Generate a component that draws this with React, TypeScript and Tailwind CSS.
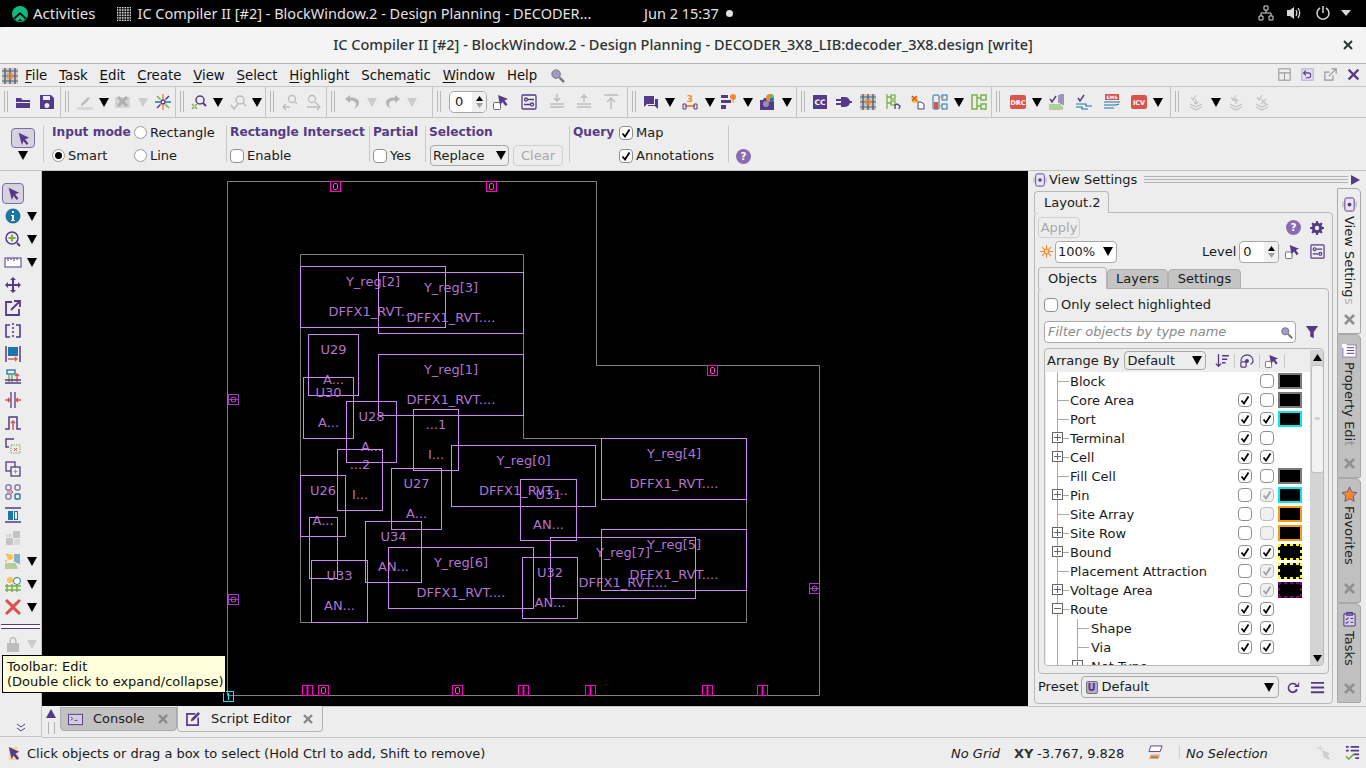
import type { ReactNode } from 'react'

const PUR = '#553b87'
const GR = '#bcbcbc'
const RED = '#d9534f'
const BLU = '#1c75a8'
const ORG = '#f08a32'
const GRN = '#7bb04a'

const icons: Record<string, ReactNode> = {
    open: <path d="M1 4h5l1.500 2H15v2H1zM1 9h14v5H1z" fill={PUR} />,
    save: <path fillRule="evenodd" d="M1 1h11l3 3v11H1zM4 2v4h7V2zm4 7a2.500 2.500 0 100 5 2.500 2.500 0 000-5z" fill={PUR} />,
    pen: <g><path d="M4 10l7-7 2 1.500-7 7H4z" fill={GR} /><rect x="0" y="13" width="16" height="3" fill="#d8d8d8" /></g>,
    xdoc: <g><rect x="0" y="3" width="15" height="11" fill="#d4d4d4" /><path d="M3 3l9 9M12 3l-9 9" stroke="#b0b0b0" strokeWidth="3" /></g>,
    star: <g strokeWidth="1.500"><path d="M8 0v5M8 11v5" stroke={ORG} /><path d="M0 8h5M11 8h5" stroke={BLU} /><path d="M2 2l3.500 3.500M10.500 10.500L14 14" stroke={GRN} /><path d="M14 2l-3.500 3.500M5.500 10.500L2 14" stroke={PUR} /><circle cx="8" cy="8" r="2" stroke={PUR} /></g>,
    zoomg: <g><circle cx="10" cy="6" r="4" stroke={PUR} strokeWidth="1.500" /><path d="M13 9l3 3" stroke={PUR} strokeWidth="2" /><path d="M2 10l2 2M7 10l-2 2M2 15l2-2M7 15l-2-2" stroke={GRN} strokeWidth="1.500" /></g>,
    zoomd: <g stroke={GR} strokeWidth="1.500"><circle cx="10" cy="6" r="4" /><path d="M13 9l3 3M1 11l3 4 4-5" /></g>,
    zl: <g stroke={GR} strokeWidth="1.300"><circle cx="10" cy="5" r="3.500" /><path d="M13 8l2 2M8 13H1M4 10l-3 3 3 3" /></g>,
    zr: <g stroke={GR} strokeWidth="1.300"><circle cx="6" cy="5" r="3.500" /><path d="M9 8l3 3M1 13h13M11 10l3 3-3 3" /></g>,
    undo: <path d="M6 1L1 5l5 4V6.500c4 0 6 1.500 6 3.500 0 2-1 3.500-2 4.500 3-1 5-3 5-6s-3-5-9-5z" fill="#b4b4b4" />,
    redo: <path d="M10 1l5 4-5 4V6.500c-4 0-6 1.500-6 3.500 0 2 1 3.500 2 4.500-3-1-5-3-5-6s3-5 9-5z" fill="#b4b4b4" />,
    cursor: <g><rect x="0.500" y="8.500" width="7" height="7" rx="1" fill="#fff" stroke="#666" /><path d="M5 1l10 4-3.500 1.500 3 4-2 1.500-3-4L7 11z" fill={PUR} /></g>,
    cfg: <g stroke={PUR} strokeWidth="1.300"><rect x="1" y="1" width="14" height="14" rx="1" /><circle cx="5" cy="5.500" r="1.500" /><path d="M7 5.500h6M3 10.500h6" /><circle cx="11" cy="10.500" r="1.500" /></g>,
    d1: <g stroke={GR} strokeWidth="1.500"><path d="M8 0v7M5 4l3 3 3-3M1 10h14M1 13h14" /></g>,
    d2: <g stroke={GR} strokeWidth="1.500"><path d="M8 8V1M5 4l3-3 3 3M1 10h14M1 13h14" /></g>,
    d3: <g stroke={GR} strokeWidth="1.500"><path d="M1 1h14M8 15V4M4 8l4-4 4 4" /></g>,
    chat: <g fill={PUR}><path d="M1 2h10v8H4l-3 3z" /><path d="M12 5h3v10l-3-3H5v-1h7z" /></g>,
    ruler3: <g><text x="8" y="8" textAnchor="middle" fontSize="9" fontWeight="700" fill={ORG} fontFamily="DejaVu Sans">3</text><path d="M3 12h10" stroke={ORG} strokeWidth="2" /><path d="M1 10h3v5H1zM12 10h3v5h-3z" stroke={PUR} /></g>,
    bars: <g><path d="M0 1h7v3H0zM0 6h10v3H0zM0 11h5v4H0z" fill={PUR} /><circle cx="12" cy="3" r="3" fill={ORG} /><path d="M12 6v3" stroke={ORG} /></g>,
    cam: <g><path d="M1 6h3l1-2h5v12H1zM10 7h5v9h-5z" fill={PUR} /><circle cx="11" cy="4" r="4" fill={ORG} /><path d="M11 0a4 4 0 014 4h-4z" fill={GRN} /><path d="M11 4h4a4 4 0 01-4 4z" fill={BLU} /><circle cx="7" cy="10" r="3" fill="#9a8cb8" /></g>,
    cc: <g><rect x="1" y="1" width="14" height="14" fill={PUR} /><text x="8" y="11" textAnchor="middle" fontSize="7.500" fontWeight="700" fill="#fff" fontFamily="DejaVu Sans">CC</text></g>,
    plug: <g fill={PUR}><path d="M5 3h4a5 5 0 010 10H5z" /><path d="M0 5h5v2H0zM0 9h5v2H0zM13 7h3v2h-3z" /></g>,
    chip: <g><rect x="0" y="0" width="16" height="16" fill="#d9c9a8" /><path d="M3 0v16M8 0v16M13 0v16" stroke={PUR} strokeWidth="1.200" /><path d="M0 3h16M0 8h16M0 13h16" stroke={BLU} strokeWidth="1.200" /><rect x="5" y="5" width="6" height="6" fill={ORG} opacity=".6" /></g>,
    tbchip: <g><rect x="0" y="0" width="16" height="16" fill="#cfcfcf" /><path d="M2 0v16M5 0v16M8 0v16M11 0v16M14 0v16M0 2h16M0 5h16M0 8h16M0 11h16M0 14h16" stroke="#000" strokeWidth="1" /></g>,
    tree: <g strokeWidth="1.300"><path d="M2 0v15M2 3h5M2 9h5" stroke={GRN} /><rect x="6" y="1" width="4" height="4" stroke={GRN} /><rect x="6" y="7" width="4" height="4" stroke={GRN} /><path d="M10 15v-4l2-1 3 2-1 3" stroke={PUR} /></g>,
    hand: <g><path d="M1 3l6-1 1 6-5 1z" fill="#f5c400" /><path d="M2 2l5 5M7 2L2 7" stroke={RED} strokeWidth="1.500" /><path d="M8 8h3l3 2v5H8z" fill="#fff" stroke={PUR} /></g>,
    batt: <g><rect x="1" y="1" width="6" height="14" rx="1" stroke={BLU} /><rect x="2" y="8" width="4" height="7" fill={RED} /><rect x="10" y="1" width="5" height="5" stroke={BLU} /><rect x="10" y="10" width="5" height="5" stroke={BLU} /><path d="M7 3h5M8 12h2" stroke={ORG} /></g>,
    gboxes: <g stroke={GRN} strokeWidth="1.500"><rect x="1" y="1" width="5" height="14" /><rect x="10" y="1" width="5" height="5" /><rect x="10" y="10" width="5" height="5" /><path d="M6 4h4M6 12h4" /></g>,
    drc: <g><rect x="0" y="1" width="16" height="14" rx="2" fill={RED} /><text x="8" y="11" textAnchor="middle" fontSize="6.500" fontWeight="700" fill="#fff" fontFamily="DejaVu Sans">DRC</text></g>,
    icv: <g><rect x="0" y="1" width="16" height="14" rx="2" fill={RED} /><text x="8" y="11" textAnchor="middle" fontSize="6.500" fontWeight="700" fill="#fff" fontFamily="DejaVu Sans">ICV</text></g>,
    chkg: <g><path d="M1 5l2 3 4-6" stroke={PUR} strokeWidth="1.500" /><path d="M0 11h12M0 13h14M0 15h14" stroke={GRN} /><path d="M10 1v8M12 0v10M14 0v11" stroke={PUR} /></g>,
    chkb: <g><path d="M2 4l2 3 4-6" stroke={PUR} strokeWidth="1.500" /><path d="M0 10h10v2H16M0 13h6v2H12" stroke={BLU} strokeWidth="1.200" /></g>,
    ems: <g><rect x="1" y="0" width="14" height="6" fill={RED} /><text x="8" y="5" textAnchor="middle" fontSize="4.500" fontWeight="700" fill="#fff" fontFamily="DejaVu Sans">EMS</text><path d="M0 8h16M0 11h12l3-1M0 14h10" stroke={BLU} strokeWidth="1.200" /></g>,
    stack1: <g stroke="#c4c4c4" strokeWidth="1.300"><path d="M3 3l2 3 3-5M8 5v5M6 8l2 2 2-2M2 10l6 3 6-3M2 13l6 3 6-3" /></g>,
    stack2: <g stroke="#c4c4c4" strokeWidth="1.300"><path d="M3 3l2 3 3-5M8 10V5M6 7l2-2 2 2M2 10l6 3 6-3M2 13l6 3 6-3" /></g>,
    stack3: <g stroke="#c4c4c4" strokeWidth="1.300"><path d="M3 3l2 3 3-5M7 5l5 5M12 5l-5 5M2 10l6 3 6-3M2 13l6 3 6-3" /></g>,
    help: <g><circle cx="8" cy="8" r="8" fill="#8a6bb0" /><text x="8" y="12" textAnchor="middle" fontSize="11" fontWeight="700" fill="#fff" fontFamily="DejaVu Sans">?</text></g>,
    gear: <path fillRule="evenodd" d="M7 0h2l.500 2.200 1.500.600 2-1.200 1.400 1.400-1.200 2 .600 1.500L16 7v2l-2.200.500-.600 1.500 1.200 2-1.400 1.400-2-1.200-1.500.600L9 16H7l-.500-2.200-1.500-.600-2 1.200-1.400-1.400 1.200-2-.600-1.500L0 9V7l2.200-.500.600-1.500-1.200-2L3 1.600l2 1.200 1.500-.600zM8 5.500a2.500 2.500 0 100 5 2.500 2.500 0 000-5z" fill={PUR} />,
    sun: <g stroke={ORG} strokeWidth="1.300"><path d="M8 0v16M0 8h16M2.500 2.500l11 11M13.500 2.500l-11 11" /><circle cx="8" cy="8" r="3" fill="#fbd9b5" /></g>,
    funnel: <path d="M1 1h14L10 8v7l-4-2V8z" fill={PUR} />,
    mag: <g><circle cx="6.500" cy="6.500" r="4.500" fill="#a49abb" stroke="#6f6690" /><path d="M10 10l5 5" stroke="#777" strokeWidth="2.500" /></g>,
    sort: <g stroke={PUR} strokeWidth="1.500"><path d="M4 0v14M1 11l3 3 3-3M8 2h8M8 6h6M8 10h4" /></g>,
    eye: <g stroke={PUR} strokeWidth="1.400"><path d="M1 8a7 7 0 0114 0c0 2-2 3-3 4" /><circle cx="8" cy="8" r="1.500" fill={PUR} /><rect x="1" y="9" width="6" height="6" rx="1" fill="#eee" /></g>,
    reload: <path d="M13 6a6 6 0 10.500 5l-2-1A4 4 0 1111 6.500L9 8h6V2z" fill={PUR} />,
    menu: <path d="M1 2h14v2H1zM1 7h14v2H1zM1 12h14v2H1z" fill={PUR} />,
    arrow: <path d="M2 1l13 6-5 2 4 5-2 2-4-5-2 5z" fill={PUR} />,
    info: <g><circle cx="8" cy="8" r="7.500" fill={BLU} /><path d="M7 3h2v2H7zM6 7h3v5h1v1H6v-1h1V8H6z" fill="#fff" /></g>,
    zoomp: <g stroke={PUR} strokeWidth="1.500"><circle cx="7" cy="7" r="6" /><path d="M12 12l3 3" strokeWidth="2" /><path d="M3.500 7h7M7 3.500v7" stroke={GRN} strokeWidth="2" /></g>,
    ruler: <g><rect x="0" y="4" width="16" height="9" fill="#fff" stroke={PUR} /><path d="M3 4v3M6 4v2M9 4v3M12 4v2" stroke={PUR} /></g>,
    move: <path d="M8 0l3 3H9v4h4V5l3 3-3 3V9H9v4h2l-3 3-3-3h2V9H3v2L0 8l3-3v2h4V3H5z" fill={PUR} />,
    ext: <g stroke={PUR} strokeWidth="1.800"><path d="M7 2H1v13h13V9" /><path d="M6 10l8-8M9 1h6v6" /></g>,
    flip: <g stroke={PUR} strokeWidth="1.600"><path d="M5 2H1v12h4M11 2h4v12h-4" /><path d="M8 0v16" strokeDasharray="2 2" /></g>,
    aligns: <g><path d="M1 0v16M15 0v16" stroke={PUR} strokeWidth="1.500" /><rect x="3" y="1" width="10" height="9" fill={BLU} /><path d="M3 13h9M10 11l2 2-2 2" stroke={RED} strokeWidth="1.300" /></g>,
    spread: <g><rect x="2" y="1" width="8" height="4" stroke={BLU} strokeWidth="1.300" /><path d="M4 5v8M7 5v8" stroke={GRN} strokeWidth="1.500" /><path d="M12 13V5M10 7l2-2 2 2" stroke={RED} strokeWidth="1.300" /><path d="M0 11h16M0 14h16" stroke={PUR} strokeWidth="1.300" /></g>,
    gap: <g><path d="M6 0v16M10 0v16" stroke={PUR} strokeWidth="1.300" /><path d="M0 8h5M3 6l2 2-2 2M16 8h-5M13 6l-2 2 2 2" stroke={RED} strokeWidth="1.500" /></g>,
    bump: <g><path d="M0 14h4V2h8v12h4" stroke={PUR} strokeWidth="1.500" /><path d="M8 15V6M6 8l2-2 2 2" stroke={RED} strokeWidth="1.500" /></g>,
    sel1: <g><path d="M9 1H1v8h3" stroke={PUR} strokeWidth="1.400" /><rect x="6" y="7" width="9" height="8" stroke={GRN} strokeDasharray="1.500 1" /><path d="M9 10l3 3M12 10l-3 3" stroke={RED} /></g>,
    sel2: <g><rect x="1" y="1" width="9" height="9" stroke={PUR} strokeWidth="1.300" /><rect x="6" y="6" width="9" height="9" fill="#eee" stroke={PUR} strokeWidth="1.300" /><path d="M8.500 10.500h4M10.500 8.500v4" stroke={GRN} /></g>,
    sel3: <g><rect x="1" y="1" width="5" height="5" rx="1" stroke={PUR} /><rect x="10" y="1" width="5" height="5" rx="1" stroke={PUR} /><rect x="1" y="10" width="5" height="5" rx="1" stroke={PUR} /><rect x="10" y="10" width="5" height="5" rx="1" stroke={BLU} strokeWidth="1.400" /><path d="M2 8h6M6 6l2 2-2 2" stroke={RED} /></g>,
    bar2: <g><path d="M0 1h16M0 15h16" stroke={PUR} strokeWidth="1.600" /><rect x="3" y="4" width="5" height="9" fill={BLU} /><rect x="9.500" y="4.500" width="3" height="8" stroke={BLU} /></g>,
    check4: <g fill="#c4c4c4"><path d="M8 1h7v7H8zM1 8h7v7H1z" /><path d="M1 4h6v3H1zM9 9h6v6H9z" fill="#d8d8d8" /></g>,
    lay1: <g><circle cx="5" cy="4" r="3" fill="#fbc34b" /><path d="M0 8h2M1 1l2 1" stroke={ORG} /><path d="M0 11h11M0 13h12M0 15h13" stroke={GRN} /><path d="M10 1v8M12 1v9M14 1v10" stroke={BLU} /></g>,
    lay2: <g><circle cx="5" cy="4" r="3" fill="#fbc34b" /><circle cx="12" cy="5" r="3.500" fill="#fff" stroke={BLU} /><path d="M0 10h16M0 14h16M2 8v8M7 8v8M12 8v8" stroke={GRN} strokeWidth="1.500" /></g>,
    bigx: <path d="M2 0l6 5.500L14 0l2 2-6 6 6 6-2 2-6-5.500L2 16l-2-2 6-6-6-6z" fill={RED} />,
    lock: <g fill="#bdbdbd"><path fillRule="evenodd" d="M2 7h12v9H2zM4.500 7V4.500a3.500 3.500 0 017 0V7h-1.500V4.500a2 2 0 00-4 0V7z" /></g>,
    term: <g><rect x="0.500" y="2.500" width="15" height="11" stroke={PUR} fill="#cfcfe0" /><path d="M3 5l2 2-2 2M7 9h3" stroke={PUR} /></g>,
    edit: <g><path d="M10 3H1v12h12V7" stroke={PUR} strokeWidth="1.800" /><path d="M5 11l1-3 7-7 2 2-7 7z" fill={PUR} /></g>,
    statusSel: <g><path d="M3 1h10v14H3z" fill="#f2d68a" opacity=".8" /><path d="M3 1l11 5-4 2 4 5-2 2-4-5-2 4z" fill={PUR} /></g>,
    layers: <g><path d="M3 1h12l-2 6H1z" fill="#fff" stroke={PUR} /><path d="M3 10h10l-2 5H1z" fill={ORG} opacity=".7" /><path d="M3 13h8" stroke={BLU} /></g>,
    sparkle: <g fill="#cfcfcf"><path d="M3 0h1v6H3zM0 3h7v1H0z" /><path d="M5 5l9 4-3 2 3 3-2 2-3-3-1 2z" /></g>,
    tasks: <g><path d="M1 1h3v2H1zM6 1h9v2H6zM1 5h3v2H1zM6 5h9v2H6zM9 9h6v2H9zM11 13h4v2h-4z" fill={PUR} /><path d="M1 12l3 3 5-5" stroke={GRN} strokeWidth="1.800" /></g>,
    vset: <g><path d="M1 5v6M15 5v6" stroke="#bbb" strokeWidth="1.500" /><rect x="3" y="1" width="10" height="14" rx="2" fill="#e8e2f2" stroke={PUR} /><circle cx="8" cy="8" r="2" fill={PUR} /></g>,
    prop: <g><rect x="1" y="2" width="14" height="13" fill="#fff" stroke="#8f7cb5" /><path d="M5 5h8M5 8h8M5 11h8" stroke={PUR} /><path d="M0 1h5v4H0z" fill="#fff" /></g>,
    fav: <path d="M8 0l2.400 5.200 5.600.700-4.100 3.800 1.100 5.600L8 12.500l-5 2.800 1.100-5.600L0 5.900l5.600-.700z" fill={ORG} stroke={PUR} strokeWidth=".8" />,
    clip: <g stroke={PUR} strokeWidth="1.100"><rect x="2" y="2" width="12" height="13" rx="1" fill="#d4cfe2" /><rect x="5" y="0.500" width="6" height="3" /><path d="M4 7l1 1 2-2M9 7h3M4 11l1 1 2-2M9 11h3" /></g>,
    wgrid: <g stroke="#999" strokeWidth="1.300"><rect x="1" y="1" width="14" height="14" /><path d="M1 6h14M8 6v9" /></g>,
    wrest: <g><rect x="1" y="1" width="14" height="14" stroke="#a99bc7" fill="#e4dff0" /><path d="M6 3L3 6l3 3M3 6h6a3 3 0 010 6H6" stroke={PUR} strokeWidth="1.300" /></g>,
    wext: <g stroke="#999" strokeWidth="1.500"><path d="M7 5H1v10h10V9" /><path d="M6 10l9-9M9 1h6v6" /></g>,
    wx: <path d="M1 3l2-2 5 5 5-5 2 2-5 5 5 5-2 2-5-5-5 5-2-2 5-5z" fill={PUR} />,
}

function Ic({ n, s = 16 }: { n: string; s?: number }) {
    return (
        <svg width={s} height={s} viewBox="0 0 16 16" fill="none" className="shrink-0 block overflow-visible">
            {icons[n]}
        </svg>
    )
}

function Dd({ off }: { off?: boolean }) {
    return (
        <svg width="10" height="9" viewBox="0 0 10 9" className="shrink-0 block">
            <path d="M0 0h10L5 9z" fill={off ? '#cccccc' : '#000'} />
        </svg>
    )
}

function S({ w, children }: { w: number; children: ReactNode }) {
    return (
        <div className="flex items-center justify-center shrink-0" style={{ width: w }}>
            {children}
        </div>
    )
}

function Grip() {
    return <div className="absolute left-[4px] top-[4px] h-[21px] w-[4px] border-x border-[#b8b8b8]" />
}

function Group({ w, pl, children }: { w: number; pl: number; children: ReactNode }) {
    return (
        <div className="relative flex items-center h-full shrink-0 border-r border-[#c4c4c4] box-border" style={{ width: w, paddingLeft: pl }}>
            <Grip />
            {children}
        </div>
    )
}

function Radio({ on }: { on?: boolean }) {
    return (
        <span className="w-[13px] h-[13px] rounded-full border border-[#9a9a9a] bg-white flex items-center justify-center shrink-0">
            {on && <span className="w-[7px] h-[7px] rounded-full bg-black" />}
        </span>
    )
}

function Check({ on, dis, blank }: { on?: boolean; dis?: boolean; blank?: boolean }) {
    if (blank) return <span className="w-[14px] h-[14px] shrink-0" />
    return (
        <span className={`w-[14px] h-[14px] rounded-[4px] border flex items-center justify-center shrink-0 ${dis ? 'border-[#bcbcbc] bg-[#f0f0f0]' : 'border-[#8f8f8f] bg-white'}`}>
            {on && (
                <svg width="10" height="10" viewBox="0 0 10 10">
                    <path d="M1.500 5.500L4 8.500 8.500 1.500" fill="none" stroke={dis ? '#a0a0a0' : '#000'} strokeWidth="1.800" />
                </svg>
            )}
        </span>
    )
}

function Sep() {
    return <div className="w-px h-[36px] bg-[#c8c8c8] shrink-0" />
}

const cells = [
    { x: 300, y: 266, w: 146, h: 62, a: 'Y_reg[2]', b: 'DFFX1_RVT....' },
    { x: 378, y: 272, w: 146, h: 62, a: 'Y_reg[3]', b: 'DFFX1_RVT....' },
    { x: 308, y: 334, w: 51, h: 62, a: 'U29', b: 'A...' },
    { x: 303, y: 377, w: 51, h: 62, a: 'U30', b: 'A...' },
    { x: 378, y: 354, w: 146, h: 62, a: 'Y_reg[1]', b: 'DFFX1_RVT....' },
    { x: 346, y: 401, w: 51, h: 62, a: 'U28', b: 'A...' },
    { x: 413, y: 409, w: 46, h: 62, a: '...1', b: 'I...' },
    { x: 337, y: 449, w: 46, h: 62, a: '...2', b: 'I...' },
    { x: 451, y: 445, w: 145, h: 62, a: 'Y_reg[0]', b: 'DFFX1_RVT....' },
    { x: 601, y: 438, w: 146, h: 62, a: 'Y_reg[4]', b: 'DFFX1_RVT....' },
    { x: 520, y: 479, w: 57, h: 62, a: 'U31', b: 'AN...' },
    { x: 300, y: 475, w: 46, h: 62, a: 'U26', b: 'A...' },
    { x: 391, y: 468, w: 51, h: 62, a: 'U27', b: 'A...' },
    { x: 309, y: 517, w: 29, h: 62, a: '', b: '' },
    { x: 365, y: 521, w: 57, h: 62, a: 'U34', b: 'AN...' },
    { x: 311, y: 560, w: 57, h: 63, a: 'U33', b: 'AN...' },
    { x: 388, y: 547, w: 146, h: 62, a: 'Y_reg[6]', b: 'DFFX1_RVT....' },
    { x: 522, y: 557, w: 56, h: 62, a: 'U32', b: 'AN...' },
    { x: 550, y: 537, w: 146, h: 62, a: 'Y_reg[7]', b: 'DFFX1_RVT....' },
    { x: 601, y: 529, w: 146, h: 62, a: 'Y_reg[5]', b: 'DFFX1_RVT....' },
]

const pins = [
    { x: 330, y: 181, v: 0 }, { x: 486, y: 181, v: 0 },
    { x: 302, y: 685, v: 1 }, { x: 318, y: 685, v: 0 }, { x: 452, y: 685, v: 0 }, { x: 518, y: 685, v: 1 },
    { x: 585, y: 685, v: 1 }, { x: 702, y: 685, v: 1 }, { x: 757, y: 685, v: 1 }, { x: 707, y: 365, v: 0 },
]

const sidePins = [{ x: 228, y: 394 }, { x: 228, y: 594 }, { x: 809, y: 583 }]

const Gray = 'border-[#7a7a7a]'
const rows = [
    { l: 'Block', c1: 'none', c2: 'off', sw: Gray },
    { l: 'Core Area', c1: 'on', c2: 'off', sw: Gray },
    { l: 'Port', c1: 'on', c2: 'on', sw: 'border-[#00e8f0]' },
    { l: 'Terminal', ex: '+', c1: 'on', c2: 'off' },
    { l: 'Cell', ex: '+', c1: 'on', c2: 'on' },
    { l: 'Fill Cell', c1: 'on', c2: 'off', sw: Gray },
    { l: 'Pin', ex: '+', c1: 'off', c2: 'dison', sw: 'border-[#00e8f0]' },
    { l: 'Site Array', c1: 'off', c2: 'dis', sw: 'border-[#f59e0b]' },
    { l: 'Site Row', ex: '+', c1: 'off', c2: 'dis', sw: 'border-[#f59e0b]' },
    { l: 'Bound', ex: '+', c1: 'on', c2: 'on', dot: '#ffff00' },
    { l: 'Placement Attraction', c1: 'off', c2: 'dison', dot: '#ffff00' },
    { l: 'Voltage Area', ex: '+', c1: 'off', c2: 'dison', dot: '#800080' },
    { l: 'Route', ex: '-', c1: 'on', c2: 'on' },
    { l: 'Shape', sub: true, c1: 'on', c2: 'on' },
    { l: 'Via', sub: true, c1: 'on', c2: 'on' },
    { l: 'Net Type', sub: true, ex: '+', c1: 'none', c2: 'none' },
]

function Box({ c }: { c: string }) {
    if (c === 'none') return <Check blank />
    return <Check on={c === 'on' || c === 'dison'} dis={c === 'dis' || c === 'dison'} />
}

function Expander({ sign }: { sign: string }) {
    return (
        <span className="absolute top-[3px] w-[11px] h-[11px] border border-[#666] bg-white flex items-center justify-center">
            <span className="relative block w-[7px] h-px bg-[#666]">
                {sign === '+' && <span className="absolute left-[3px] top-[-3px] w-px h-[7px] bg-[#666]" />}
            </span>
        </span>
    )
}

function DotSwatch({ color }: { color: string }) {
    return (
        <svg width="24" height="16" viewBox="0 0 24 16" className="block shrink-0">
            <rect width="24" height="16" fill="#000" />
            <path d="M0 1h24M0 15h24M1 0v16M23 0v16" stroke={color} strokeWidth="2" strokeDasharray="3 3" />
        </svg>
    )
}

function TreeRow({ r }: { r: (typeof rows)[number] }) {
    return (
        <div className="relative flex items-center h-[19px] shrink-0">
            <span className="absolute left-[11px] top-0 h-[19px] w-px bg-[#a8a8a8]" />
            {r.sub && <span className="absolute left-[31px] top-0 h-[19px] w-px bg-[#a8a8a8]" />}
            <span className={`absolute top-[9px] h-px bg-[#a8a8a8] ${r.sub ? 'left-[31px] w-[12px]' : 'left-[11px] w-[12px]'}`} />
            {r.ex && (
                <span className={r.sub ? 'absolute left-[26px] top-0' : 'absolute left-[6px] top-0'}>
                    <Expander sign={r.ex} />
                </span>
            )}
            <span className={`text-[13px] text-[#1a1a1a] whitespace-nowrap ${r.sub ? 'ml-[45px]' : 'ml-[24px]'}`}>{r.l}</span>
            <div className="absolute left-[192px] top-[2px] flex items-center gap-[8px]">
                <Box c={r.c1} />
                <Box c={r.c2} />
            </div>
            <div className="absolute left-[232px] top-[1px]">
                {r.sw && <div className={`w-[24px] h-[16px] bg-black border-2 ${r.sw}`} />}
                {r.dot && <DotSwatch color={r.dot} />}
            </div>
        </div>
    )
}

function CellBox({ c }: { c: (typeof cells)[number] }) {
    return (
        <div
            className="absolute border border-[#cf87f5] flex flex-col items-center box-border text-[13px] leading-[15px] text-[#b373d3] whitespace-nowrap"
            style={{ left: c.x - 42, top: c.y - 171, width: c.w, height: c.h }}
        >
            <span className="mt-[7px] h-[15px]">{c.a}</span>
            <span className="mt-[15px] h-[15px]">{c.b}</span>
        </div>
    )
}

function Pin({ x, y, v }: { x: number; y: number; v: number }) {
    return (
        <svg className="absolute" width="11" height="11" viewBox="0 0 11 11" style={{ left: x - 42, top: y - 171 }}>
            <rect x=".5" y=".5" width="10" height="10" fill="none" stroke="#ff00c8" />
            {v ? <path d="M5.500 1v9" stroke="#ff00c8" strokeWidth="2" /> : <rect x="3.500" y="2.500" width="4" height="6" rx="1.500" fill="none" stroke="#ff40d0" />}
        </svg>
    )
}

function SidePin({ x, y }: { x: number; y: number }) {
    return (
        <svg className="absolute" width="11" height="11" viewBox="0 0 11 11" style={{ left: x - 42, top: y - 171 }}>
            <rect x=".5" y=".5" width="10" height="10" fill="none" stroke="#a03cc0" />
            <circle cx="5.500" cy="5.500" r="2.500" fill="none" stroke="#c050e0" />
            <path d="M0 5.500h11" stroke="#a03cc0" />
        </svg>
    )
}

function VTab({ icon, label, fade, h, active }: { icon: string; label: string; fade?: string; h: number; active?: boolean }) {
    return (
        <div
            className={`relative flex flex-col items-center shrink-0 w-[24px] border border-[#a8a8a8] rounded-tr-[5px] rounded-br-[2px] overflow-hidden ${active ? 'bg-[#ededed]' : 'bg-[#c0c0c0]'}`}
            style={{ height: h }}
        >
            <div className="mt-[8px]"><Ic n={icon} s={15} /></div>
            <span className="mt-[4px] [writing-mode:vertical-rl] text-[13px] leading-[22px] text-[#222] whitespace-nowrap">
                {label}
                {fade && <span className="opacity-30">{fade}</span>}
            </span>
            <div className="absolute bottom-[8px]">
                <svg width="11" height="11" viewBox="0 0 11 11" className="block"><path d="M1 1l9 9M10 1l-9 9" stroke="#8f8f8f" strokeWidth="2.600" /></svg>
            </div>
        </div>
    )
}

function Menu({ t, u }: { t: string; u: number }) {
    return (
        <span>
            {t.slice(0, u)}
            <span className="underline underline-offset-2">{t[u]}</span>
            {t.slice(u + 1)}
        </span>
    )
}

const leftIcons: [string, boolean][] = [
    ['info', true], ['zoomp', true], ['ruler', true], ['move', false], ['ext', false], ['flip', false], ['aligns', false],
    ['spread', false], ['gap', false], ['bump', false], ['sel1', false], ['sel2', false], ['sel3', false], ['bar2', false],
    ['check4', false], ['lay1', true], ['lay2', true], ['bigx', true],
]

export default function App() {
    return (
        <div className="relative w-[1366px] h-[768px] overflow-hidden flex flex-col bg-[#ededed] text-[#1a1a1a] font-['DejaVu_Sans',sans-serif] text-[13px]">
            {/* GNOME top bar */}
            <div className="relative h-[27px] bg-black text-[#e2e2e2] flex items-center shrink-0 font-['Noto_Sans',sans-serif] text-[14.500px]">
                <svg width="16" height="16" viewBox="0 0 16 16" className="ml-[12px] mr-[5px]">
                    <circle cx="8" cy="8" r="8" fill="#10b981" />
                    <path d="M1.500 12L8 6l6.500 6L11 15H5z" fill="#000" />
                    <path d="M3 13l5-4.500 5 4.500-2 2.500-3-2.500-3 2.500z" fill="#10b981" />
                </svg>
                <span className="text-[15px]">Activities</span>
                <span className="ml-[21px]"><Ic n="tbchip" s={14} /></span>
                <span className="ml-[7px] whitespace-nowrap">IC Compiler II [#2] - BlockWindow.2 - Design Planning - DECODER...</span>
                <span className="absolute left-[644px] whitespace-nowrap">Jun 2  15:37</span>
                <span className="absolute left-[726px] w-[7px] h-[7px] rounded-full bg-[#e2e2e2]" />
                <div className="absolute left-[1258px] top-[5px] flex items-center">
                    <svg width="16" height="16" viewBox="0 0 16 16"><path d="M6 1h4v4H6zM1 11h4v4H1zM11 11h4v4h-4zM8 5v3M3 11V8h10v3" stroke="#d8d8d8" fill="none" strokeWidth="1" /></svg>
                    <svg width="16" height="16" viewBox="0 0 16 16" className="ml-[12px]"><path d="M1 5h3l4-3v12l-4-3H1z" fill="#d8d8d8" /><path d="M10 5c1 2 1 4 0 6M12 3c2 3 2 7 0 10" stroke="#d8d8d8" strokeWidth="1.300" fill="none" /></svg>
                    <svg width="16" height="16" viewBox="0 0 16 16" className="ml-[13px]"><path d="M5 3a6 6 0 106 0M8 1v7" stroke="#d8d8d8" strokeWidth="1.500" fill="none" /></svg>
                    <svg width="10" height="6" viewBox="0 0 10 6" className="ml-[10px]"><path d="M0 0h10L5 6z" fill="#d8d8d8" /></svg>
                </div>
            </div>

            {/* Window title */}
            <div className="relative h-[37px] shrink-0 bg-[#f4f4f4] rounded-t-[6px] border-b border-[#b4b4b0] flex items-center justify-center font-['Noto_Sans',sans-serif] text-[14.500px] font-medium text-[#2e3436]">
                <span className="whitespace-nowrap">IC Compiler II [#2] - BlockWindow.2 - Design Planning - DECODER_3X8_LIB:decoder_3X8.design [write]</span>
                <svg width="10" height="10" viewBox="0 0 10 10" className="absolute left-[1343px] top-[13px]"><path d="M1 1l8 8M9 1L1 9" stroke="#2e3436" strokeWidth="2" /></svg>
            </div>

            {/* Menu bar */}
            <div className="relative h-[23px] shrink-0 flex items-center border-b border-[#c8c8c8] text-[13.300px] pt-px">
                <span className="ml-[2px]"><Ic n="chip" s={16} /></span>
                <div className="ml-[7px] flex items-center gap-[11.800px] text-[#111]">
                    <Menu t="File" u={0} />
                    <Menu t="Task" u={0} />
                    <Menu t="Edit" u={0} />
                    <Menu t="Create" u={0} />
                    <Menu t="View" u={0} />
                    <Menu t="Select" u={0} />
                    <Menu t="Highlight" u={0} />
                    <Menu t="Schematic" u={5} />
                    <Menu t="Window" u={0} />
                    <span>Help</span>
                </div>
                <span className="ml-[13px]"><Ic n="mag" s={15} /></span>
                <div className="absolute left-[1278px] top-[4px] flex items-center gap-[10px]">
                    <Ic n="wgrid" s={13} />
                    <Ic n="wrest" s={13} />
                    <Ic n="wext" s={13} />
                    <Ic n="wx" s={13} />
                </div>
            </div>

            {/* Main toolbar */}
            <div className="h-[31px] shrink-0 flex items-center border-b border-[#c4c4c4]">
                <Group w={61} pl={11}><S w={24}><Ic n="open" /></S><S w={24}><Ic n="save" /></S></Group>
                <Group w={115} pl={12}><S w={24}><Ic n="pen" /></S><S w={14}><Dd /></S><S w={24}><Ic n="xdoc" /></S><S w={16}><Dd off /></S><S w={24}><Ic n="star" /></S></Group>
                <Group w={90} pl={10}><S w={24}><Ic n="zoomg" /></S><S w={16}><Dd /></S><S w={24}><Ic n="zoomd" /></S><S w={14}><Dd /></S></Group>
                <Group w={61} pl={12}><S w={24}><Ic n="zl" /></S><S w={24}><Ic n="zr" /></S></Group>
                <Group w={106} pl={13}><S w={24}><Ic n="undo" /></S><S w={16}><Dd off /></S><S w={26}><Ic n="redo" /></S><S w={12}><Dd off /></S></Group>
                <Group w={195} pl={16}>
                    <div className="w-[38px] h-[22px] shrink-0 border border-[#a8a8a8] rounded-[5px] bg-white flex items-center overflow-hidden">
                        <span className="ml-[5px] flex-1 text-[13px]">0</span>
                        <span className="w-[14px] h-full bg-[#f0f0f0] flex flex-col items-center justify-center gap-[2px]">
                            <svg width="7" height="5"><path d="M0 5h7L3.500 0z" fill="#000" /></svg>
                            <svg width="7" height="5"><path d="M0 0h7L3.500 5z" fill="#a0a0a0" /></svg>
                        </span>
                    </div>
                    <S w={28}><Ic n="cursor" /></S><S w={28}><Ic n="cfg" /></S><S w={27}><Ic n="d1" /></S><S w={27}><Ic n="d2" /></S><S w={27}><Ic n="d3" /></S>
                </Group>
                <Group w={169} pl={11}><S w={24}><Ic n="chat" /></S><S w={14}><Dd /></S><S w={26}><Ic n="ruler3" /></S><S w={13}><Dd /></S><S w={26}><Ic n="bars" /></S><S w={12}><Dd /></S><S w={26}><Ic n="cam" /></S><S w={14}><Dd /></S></Group>
                <Group w={195} pl={11}><S w={24}><Ic n="cc" /></S><S w={23}><Ic n="plug" /></S><S w={25}><Ic n="chip" /></S><S w={25}><Ic n="tree" /></S><S w={25}><Ic n="hand" /></S><S w={20}><Ic n="batt" /></S><S w={18}><Dd /></S><S w={22}><Ic n="gboxes" /></S></Group>
                <Group w={179} pl={14}><S w={24}><Ic n="drc" /></S><S w={14}><Dd /></S><S w={26}><Ic n="chkg" /></S><S w={28}><Ic n="chkb" /></S><S w={28}><Ic n="ems" /></S><S w={26}><Ic n="icv" /></S><S w={12}><Dd /></S></Group>
                <div className="relative flex items-center h-full pl-[13px]">
                    <Grip />
                    <S w={24}><Ic n="stack1" /></S><S w={16}><Dd /></S><S w={24}><Ic n="stack2" /></S><S w={28}><Ic n="stack3" /></S>
                </div>
            </div>

            {/* Input options */}
            <div className="h-[53px] shrink-0 flex items-center border-b border-[#c4c4c4] bg-[#ededed]">
                <div className="w-[43px] shrink-0 flex flex-col items-center">
                    <div className="ml-[3px] w-[24px] h-[20px] rounded-[4px] border border-[#7c6ca0] bg-[#d6d2df] flex items-center justify-center"><Ic n="arrow" s={13} /></div>
                    <div className="ml-[3px] mt-[3px]"><Dd /></div>
                </div>
                <Sep />
                <div className="w-[174px] ml-[8px] shrink-0 grid grid-cols-[82px_1fr] grid-rows-[23px_23px] items-center">
                    <span className="font-bold text-[12.200px] text-[#553b87] whitespace-nowrap">Input mode</span>
                    <span className="flex items-center gap-[3px]"><Radio />Rectangle</span>
                    <span className="flex items-center gap-[3px]"><Radio on />Smart</span>
                    <span className="flex items-center gap-[3px]"><Radio />Line</span>
                </div>
                <Sep />
                <div className="w-[139px] ml-[3px] shrink-0 grid grid-rows-[23px_23px] items-center">
                    <span className="font-bold text-[12.200px] text-[#553b87] whitespace-nowrap">Rectangle Intersect</span>
                    <span className="flex items-center gap-[3px]"><Check />Enable</span>
                </div>
                <Sep />
                <div className="w-[52px] ml-[3px] shrink-0 grid grid-rows-[23px_23px] items-center">
                    <span className="font-bold text-[12.200px] text-[#553b87]">Partial</span>
                    <span className="flex items-center gap-[3px]"><Check />Yes</span>
                </div>
                <Sep />
                <div className="w-[140px] ml-[3px] shrink-0 grid grid-rows-[23px_23px] items-center">
                    <span className="font-bold text-[12.200px] text-[#553b87]">Selection</span>
                    <div className="flex items-center gap-[4px] ml-px">
                        <div className="w-[79px] h-[21px] border border-[#a8a8a8] rounded-[4px] flex items-center justify-between px-[2px]">Replace<Dd /></div>
                        <div className="w-[50px] h-[21px] border border-[#cfcfcf] rounded-[4px] flex items-center justify-center text-[#a8a8a8]">Clear</div>
                    </div>
                </div>
                <Sep />
                <div className="w-[155px] ml-[3px] shrink-0 grid grid-cols-[46px_1fr] grid-rows-[23px_23px] items-center">
                    <span className="font-bold text-[12.200px] text-[#553b87]">Query</span>
                    <span className="flex items-center gap-[3px]"><Check on />Map</span>
                    <span />
                    <span className="flex items-center gap-[3px]"><Check on />Annotations</span>
                </div>
                <Sep />
                <div className="ml-[7px] mt-[24px]"><Ic n="help" s={15} /></div>
            </div>

            <div className="flex-1 min-h-0 flex">
                {/* Left vertical toolbar */}
                <div className="w-[42px] shrink-0 flex flex-col border-r border-[#c4c4c4] border-b relative h-[566px]">
                    <div className="mt-[12px] ml-[2px] w-[22px] h-[21px] rounded-[4px] border border-[#7c6ca0] bg-[#d6d2df] flex items-center justify-center"><Ic n="arrow" s={13} /></div>
                    <div className="flex flex-col gap-[7px] mt-[4px]">
                        {leftIcons.map(([n, dd], i) => (
                            <div key={i} className="h-[16px] flex items-center ml-[5px]">
                                <Ic n={n} />
                                {dd && <span className="ml-[6px]"><Dd /></span>}
                            </div>
                        ))}
                    </div>
                    <div className="mt-[9px] mx-[1px] h-[5px] border-y border-[#553b87] bg-white" />
                    <div className="mt-[7px] ml-[5px] flex items-center"><Ic n="lock" /><span className="ml-[6px]"><Dd off /></span></div>
                    <svg width="12" height="10" viewBox="0 0 12 10" className="absolute left-[15px] bottom-[3px]"><path d="M2 1l4 3 4-3M2 5l4 3 4-3" fill="none" stroke="#553b87" /></svg>
                </div>

                <div className="flex-1 min-w-0 flex flex-col">
                    <div className="flex h-[535px] shrink-0">
                        {/* Layout canvas */}
                        <div className="relative w-[986px] shrink-0 bg-black overflow-hidden">
                            <svg className="absolute left-0 top-0" width="986" height="535" viewBox="42 171 986 535">
                                <path d="M227.500 181.500H596.500V365.500H819.500V695.500H227.500Z" fill="none" stroke="#808080" />
                                <path d="M300.500 254.500H523.500V438.500H746.500V622.500H300.500Z" fill="none" stroke="#808080" />
                            </svg>
                            {cells.map((c, i) => <CellBox key={i} c={c} />)}
                            {pins.map((p, i) => <Pin key={i} {...p} />)}
                            {sidePins.map((p, i) => <SidePin key={i} {...p} />)}
                            <div className="absolute left-[181px] top-[520px] w-[11px] h-[11px] border border-[#00f0ff] flex items-center justify-center"><span className="w-px h-[7px] bg-[#00f0ff]" /></div>
                        </div>

                        {/* View Settings dock */}
                        <div className="w-[338px] shrink-0 flex flex-col">
                            <div className="h-[17px] shrink-0 flex items-center ml-[5px]">
                                <Ic n="vset" s={14} />
                                <span className="ml-[2px] whitespace-nowrap">View Settings</span>
                                <div className="ml-[7px] w-[204px] h-[7px] border-y border-[#b4b4b4] flex items-center"><span className="block w-full h-px bg-[#b4b4b4]" /></div>
                                <svg width="9" height="10" viewBox="0 0 9 10" className="ml-[3px]"><path d="M0 0l9 5-9 5z" fill="#553b87" /></svg>
                            </div>
                            <div className="flex-1 min-h-0 flex">
                                <div className="w-[308px] shrink-0 pl-[6px] pt-[3px]">
                                    <div className="h-[22px] w-[75px] border border-b-0 border-[#b8b8b8] rounded-t-[4px] flex items-center pl-[9px] bg-[#ededed] relative z-10 -mb-px">Layout.2</div>
                                    <div className="w-[299px] h-[492px] border border-[#b8b8b8] rounded-[4px] flex flex-col px-[3px] pb-[3px]">
                                        <div className="h-[25px] mt-[2px] flex items-center justify-between shrink-0">
                                            <div className="w-[42px] h-[21px] border border-[#d0d0d0] rounded-[4px] flex items-center justify-center text-[#a8a8a8]">Apply</div>
                                            <div className="flex items-center gap-[9px] mr-[5px]"><Ic n="help" s={15} /><Ic n="gear" s={14} /></div>
                                        </div>
                                        <div className="h-[23px] flex items-center shrink-0">
                                            <span className="ml-[2px]"><Ic n="sun" s={13} /></span>
                                            <div className="ml-[2px] w-[62px] h-[22px] border border-[#a8a8a8] rounded-[4px] bg-white flex items-center justify-between pl-[2px] pr-[3px]"><span>100%</span><Dd /></div>
                                            <span className="ml-[85px]">Level</span>
                                            <div className="ml-[3px] w-[40px] h-[22px] border border-[#a8a8a8] rounded-[4px] bg-white flex items-center overflow-hidden">
                                                <span className="ml-[3px] flex-1">0</span>
                                                <span className="w-[14px] h-full bg-[#f0f0f0] flex flex-col items-center justify-center gap-[2px]">
                                                    <svg width="7" height="5"><path d="M0 5h7L3.500 0z" fill="#000" /></svg>
                                                    <svg width="7" height="5"><path d="M0 0h7L3.500 5z" fill="#a0a0a0" /></svg>
                                                </span>
                                            </div>
                                            <span className="ml-[6px]"><Ic n="cursor" s={15} /></span>
                                            <span className="ml-[10px]"><Ic n="cfg" s={15} /></span>
                                        </div>
                                        <div className="mt-[4px] h-[22px] flex items-end relative z-10 -mb-px shrink-0 text-[13px]">
                                            <div className="h-[22px] w-[69px] border border-b-0 border-[#b8b8b8] rounded-t-[4px] bg-[#ededed] flex items-center justify-center">Objects</div>
                                            <div className="h-[20px] w-[61px] border border-[#b0b0b0] rounded-t-[4px] bg-[#c4c4c4] flex items-center justify-center">Layers</div>
                                            <div className="h-[20px] w-[73px] border border-[#b0b0b0] rounded-t-[4px] bg-[#c4c4c4] flex items-center justify-center">Settings</div>
                                        </div>
                                        <div className="h-[386px] shrink-0 border border-[#b8b8b8] rounded-[4px] px-[5px] flex flex-col">
                                            <div className="h-[32px] flex items-center shrink-0 gap-[3px]"><Check />Only select highlighted</div>
                                            <div className="h-[22px] flex items-center shrink-0">
                                                <div className="w-[252px] h-[22px] border border-[#a8a8a8] rounded-[4px] bg-white flex items-center justify-between pl-[3px] pr-[2px]">
                                                    <span className="italic text-[#8a8a8a]">Filter objects by type name</span>
                                                    <Ic n="mag" s={13} />
                                                </div>
                                                <span className="ml-[9px]"><Ic n="funnel" s={14} /></span>
                                            </div>
                                            <div className="mt-[5px] h-[318px] border border-[#b8b8b8] rounded-[4px] flex flex-col overflow-hidden w-[280px] shrink-0">
                                                <div className="h-[23px] flex items-center shrink-0 pl-[2px]">
                                                    Arrange By
                                                    <div className="ml-[4px] w-[82px] h-[19px] border border-[#a8a8a8] rounded-[4px] flex items-center justify-between pl-[3px] pr-[3px]">Default<Dd /></div>
                                                    <span className="ml-[9px] pr-[5px] border-r border-[#c8c8c8]"><Ic n="sort" s={14} /></span>
                                                    <span className="ml-[5px] pr-[5px] border-r border-[#c8c8c8]"><Ic n="eye" s={14} /></span>
                                                    <span className="ml-[5px] pr-[5px] border-r border-[#c8c8c8]"><Ic n="cursor" s={14} /></span>
                                                </div>
                                                <div className="flex-1 min-h-0 flex">
                                                    <div className="w-[264px] shrink-0 bg-white overflow-hidden flex flex-col ml-px">
                                                        {rows.map(r => <TreeRow key={r.l} r={r} />)}
                                                    </div>
                                                    <div className="w-[14px] shrink-0 bg-[#d4d4d4] flex flex-col items-center -mt-[22px] relative">
                                                        <svg width="9" height="7" className="mt-[4px]"><path d="M0 7h9L4.500 0z" fill="#000" /></svg>
                                                        <div className="mt-[4px] w-[13px] h-[108px] bg-[#f2f2f2] border border-[#c0c0c0] rounded-[3px] flex items-center justify-center text-[#bbb] text-[8px]">≡</div>
                                                        <svg width="9" height="7" className="absolute bottom-[3px]"><path d="M0 0h9L4.500 7z" fill="#000" /></svg>
                                                    </div>
                                                </div>
                                            </div>
                                        </div>
                                        <div className="flex-1 flex items-center">
                                            Preset
                                            <div className="ml-[2px] w-[198px] h-[22px] border border-[#a8a8a8] rounded-[4px] flex items-center pl-[4px] pr-[4px]">
                                                <span className="w-[12px] h-[13px] mr-[4px] rounded-[2px] bg-[#b9a9d2] border border-[#777] text-[#553b87] text-[10px] font-bold leading-[11px] text-center">U</span>
                                                <span className="flex-1">Default</span>
                                                <Dd />
                                            </div>
                                            <span className="ml-[7px]"><Ic n="reload" s={14} /></span>
                                            <span className="ml-[10px]"><Ic n="menu" s={15} /></span>
                                        </div>
                                    </div>
                                </div>
                                <div className="w-[30px] shrink-0 flex flex-col pl-[1px]">
                                    <VTab icon="vset" label="View Setting" fade="s" h={146} active />
                                    <VTab icon="prop" label="Property Edi" fade="t" h={144} />
                                    <VTab icon="fav" label="Favorites" h={125} />
                                    <VTab icon="clip" label="Tasks" h={100} />
                                </div>
                            </div>
                        </div>
                    </div>

                    {/* Dock tabs */}
                    <div className="h-[32px] shrink-0 flex border-b border-[#c4c4c4]">
                        <div className="w-[18px] shrink-0 flex flex-col items-center pt-[3px]">
                            <svg width="10" height="9" viewBox="0 0 10 9"><path d="M0 9h10L5 0z" fill="#553b87" /></svg>
                            <div className="mt-[4px] w-[7px] h-[12px] border-x border-[#b0b0b0]" />
                        </div>
                        <div className="w-[117px] h-[24px] mt-px shrink-0 bg-[#c2c2c2] border border-[#aaa] rounded-b-[4px] flex items-center pl-[7px]">
                            <Ic n="term" s={15} />
                            <span className="ml-[10px]">Console</span>
                            <svg width="10" height="10" viewBox="0 0 10 10" className="ml-[13px]"><path d="M1 1l8 8M9 1L1 9" stroke="#888" strokeWidth="2.400" /></svg>
                        </div>
                        <div className="w-[146px] h-[26px] shrink-0 border border-t-0 border-[#b4b4b4] rounded-b-[4px] flex items-center pl-[8px]">
                            <Ic n="edit" s={15} />
                            <span className="ml-[10px] whitespace-nowrap">Script Editor</span>
                            <svg width="10" height="10" viewBox="0 0 10 10" className="ml-[12px]"><path d="M1 1l8 8M9 1L1 9" stroke="#888" strokeWidth="2.400" /></svg>
                        </div>
                        <div className="flex-1 border-t border-[#c4c4c4]" />
                    </div>
                </div>
            </div>

            {/* Status bar */}
            <div className="h-[31px] shrink-0 flex items-center relative -mt-[1px] pt-[2px]">
                <span className="ml-[6px]"><Ic n="statusSel" s={15} /></span>
                <span className="ml-[6px] whitespace-nowrap">Click objects or drag a box to select (Hold Ctrl to add, Shift to remove)</span>
                <span className="absolute left-[951px] italic">No Grid</span>
                <span className="absolute left-[1014px] font-bold text-[#333]">XY</span>
                <span className="absolute left-[1037px]">-3.767, 9.828</span>
                <span className="absolute left-[1148px] top-[8px]"><Ic n="layers" s={15} /></span>
                <span className="absolute left-[1179px] top-[9px] w-px h-[12px] bg-[#ccc]" />
                <span className="absolute left-[1186px] italic">No Selection</span>
                <span className="absolute left-[1317px] top-[8px]"><Ic n="sparkle" s={15} /></span>
                <span className="absolute left-[1345px] top-[8px]"><Ic n="tasks" s={15} /></span>
            </div>

            {/* Tooltip */}
            <div className="absolute left-[2px] top-[655px] w-[224px] h-[38px] z-50 bg-[#ffffdc] border border-black px-[4px] text-[13px] leading-[15px] text-[#111] flex flex-col justify-center whitespace-nowrap">
                <span>Toolbar: Edit</span>
                <span>(Double click to expand/collapse)</span>
            </div>
        </div>
    )
}
